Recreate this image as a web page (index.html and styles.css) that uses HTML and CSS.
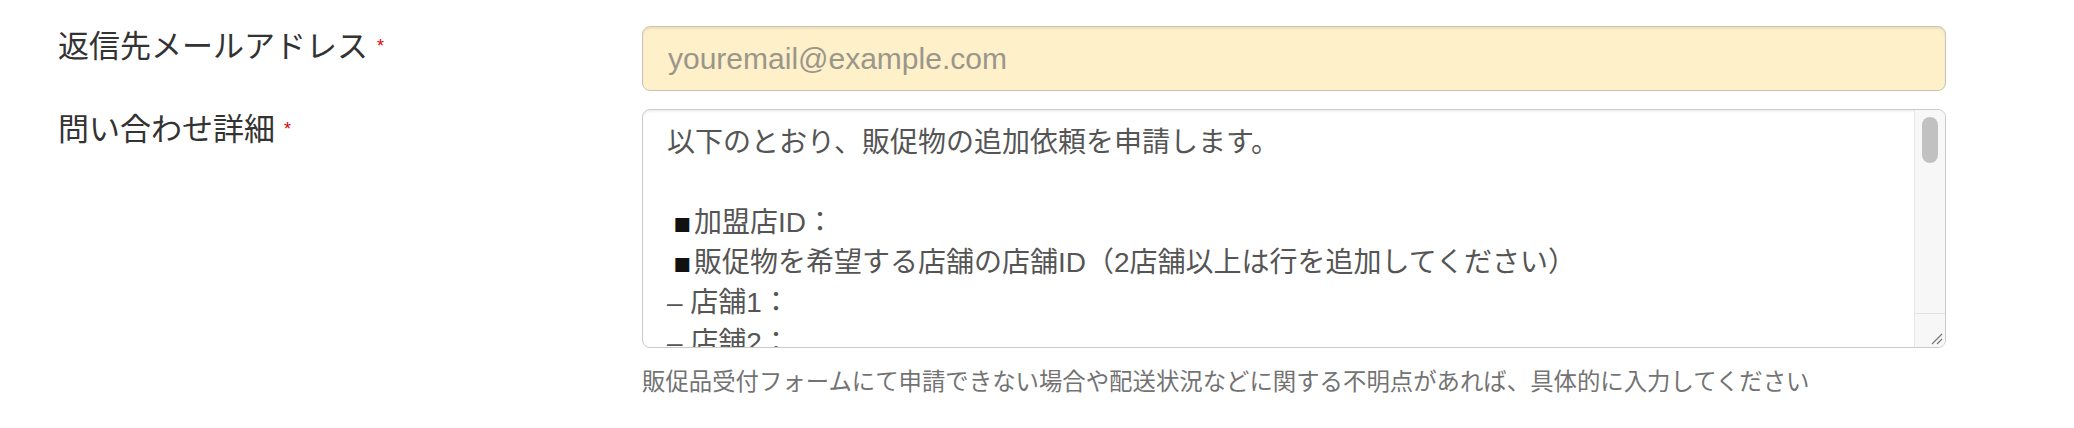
FILE: index.html
```html
<!DOCTYPE html>
<html lang="ja">
<head>
    <meta charset="UTF-8">
    <meta name="viewport" content="width=device-width, initial-scale=1.0">
    <title>お問い合わせ</title>
    <link rel="stylesheet" href="styles.css">
</head>
<body>
    <form class="form-horizontal">
        <!-- 返信先メールアドレス -->
        <div class="form-row">
            <label class="control-label" for="email">返信先メールアドレス<span class="required">*</span></label>
            <div class="field">
                <input id="email" class="form-control input-autofill" type="email" placeholder="youremail@example.com">
            </div>
        </div>

        <!-- 問い合わせ詳細 -->
        <div class="form-row">
            <label class="control-label">問い合わせ詳細<span class="required">*</span></label>
            <div class="field">
                <div class="textarea-box">
                    <div class="textarea-body">以下のとおり、販促物の追加依頼を申請します。

<span class="mark">▪</span>加盟店ID：
<span class="mark">▪</span>販促物を希望する店舗の店舗ID（2店舗以上は行を追加してください）
– 店舗1：
– 店舗2：</div>
                    <div class="scrollbar">
                        <div class="scroll-track"><div class="scroll-thumb"></div></div>
                        <div class="resizer">
                            <svg width="12" height="12" viewBox="0 0 12 12">
                                <path d="M1 11 L11 1 M6 11 L11 6" stroke="#777" stroke-width="1.2" fill="none"/>
                            </svg>
                        </div>
                    </div>
                </div>
                <p class="help-block">販促品受付フォームにて申請できない場合や配送状況などに関する不明点があれば、具体的に入力してください</p>
            </div>
        </div>
    </form>
</body>
</html>
```

FILE: styles.css
```css
body {
    margin: 0;
    background: #fff;
    font-family: "Liberation Sans", "Noto Sans CJK JP", sans-serif;
    color: #333;
}

.form-horizontal {
    padding: 26px 0 0 58px;
}

.form-row {
    display: flex;
    margin-bottom: 18px;
}

.control-label {
    width: 584px;
    font-size: 31px;
    line-height: 42px;
    color: #333;
}

.required {
    color: #e50000;
    font-size: 18px;
    margin-left: 9px;
    position: relative;
    top: -5px;
}

.field {
    width: 1304px;
}

.form-control {
    display: block;
    box-sizing: border-box;
    width: 100%;
    height: 65px;
    padding: 0 25px;
    border: 1px solid #c8c3b6;
    border-radius: 8px;
    box-shadow: inset 0 2px 2px rgba(0, 0, 0, .07);
    font-family: "Liberation Sans", "Noto Sans CJK JP", sans-serif;
    font-size: 30px;
    color: #555;
    outline: none;
}

.input-autofill {
    background: #fef0c8;
}

.input-autofill::placeholder {
    color: #9a968c;
}

.textarea-box {
    display: flex;
    box-sizing: border-box;
    height: 239px;
    border: 1px solid #cbcbcb;
    border-radius: 8px;
    box-shadow: inset 0 2px 2px rgba(0, 0, 0, .06);
    overflow: hidden;
}

.textarea-body {
    flex: 1;
    padding: 13px 24px 0 24px;
    font-size: 28px;
    line-height: 40px;
    color: #555;
    white-space: pre-wrap;
    overflow: hidden;
}

.mark {
    font-family: "DejaVu Sans", sans-serif;
    color: #111;
    margin: 0 2px 0 6px;
}

.scrollbar {
    width: 30px;
    display: flex;
    flex-direction: column;
    background: #f7f7f7;
    border-left: 1px solid #e6e6e6;
}

.scroll-track {
    flex: 1;
    padding: 7px 0 0 7px;
}

.scroll-thumb {
    width: 16px;
    height: 46px;
    border-radius: 8px;
    background: #c1c1c1;
}

.resizer {
    height: 31px;
    border-top: 1px solid #e2e2e2;
    display: flex;
    justify-content: flex-end;
    align-items: flex-end;
    padding: 0 2px 2px 0;
}

.help-block {
    margin: 16px 0 0 0;
    font-size: 23.4px;
    line-height: 36px;
    color: #737373;
}
```
